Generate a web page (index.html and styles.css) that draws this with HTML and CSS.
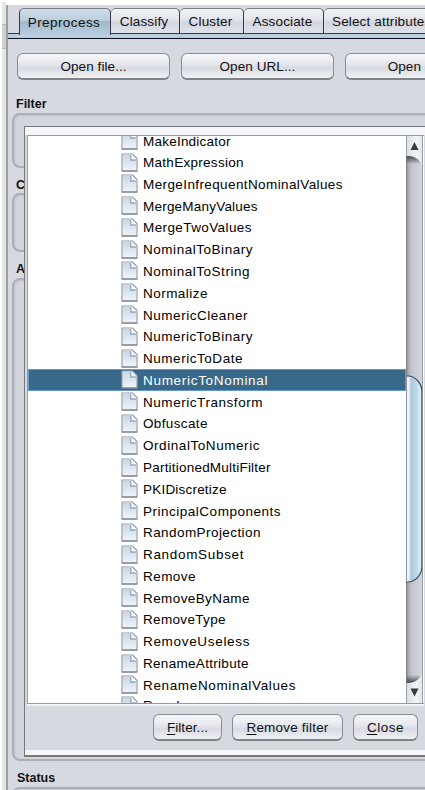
FILE: index.html
```
<!DOCTYPE html>
<html lang="en">
<head>
<meta charset="utf-8">
<title>Weka Explorer</title>
<link rel="stylesheet" href="styles.css">
</head>
<body>
<svg class="defs" width="0" height="0">
  <defs>
    <linearGradient id="paper" x1="0" y1="0" x2="0" y2="1">
      <stop offset="0" stop-color="#c8d7e6"/><stop offset="1" stop-color="#edf3f9"/>
    </linearGradient>
    <symbol id="file" viewBox="0 0 17 19">
      <path d="M1 1H11.5L16 5.5V18H1Z" fill="#fff" stroke="#949ba5" stroke-width="1.2"/>
      <path d="M2 2H10V7H15V17H2Z" fill="url(#paper)"/>
      <path d="M10 1.500V6.700H15.500Z" fill="#f5f9fc"/>
      <path d="M9.700 2V7H14.800" fill="none" stroke="#93a9c0" stroke-width="1.3"/>
      <path d="M.8 18H16.200" stroke="#777e87" stroke-width="1.2"/>
    </symbol>
  </defs>
</svg>
<div class="window">
  <div class="edge"><div class="edge-mark"></div></div>
  <main class="explorer">
    <nav class="tabs">
      <div class="tab active"><span>Preprocess</span></div>
      <div class="tab classify"><span>Classify</span></div>
      <div class="tab cluster"><span>Cluster</span></div>
      <div class="tab associate"><span>Associate</span></div>
      <div class="tab select"><span>Select attributes</span></div>
    </nav>
    <div class="toolbar">
      <button>Open file...</button><button>Open URL...</button><button>Open DB...</button>
    </div>
    <h2 class="h-filter">Filter</h2>
    <section class="panel p-filter"></section>
    <h2 class="h-current">Current relation</h2>
    <section class="panel p-current"></section>
    <h2 class="h-attr">Attributes</h2>
    <section class="panel p-attr"></section>
    <h2 class="h-status">Status</h2>
    <section class="panel p-status"></section>
  </main>
  <div class="popup">
    <div class="scroller">
      <ul class="tree" id="tree"></ul>
      <div class="scrollbar">
        <svg width="17" height="567" viewBox="0 0 17 567">
          <defs>
            <linearGradient id="track"><stop offset="0" stop-color="#77797e"/><stop offset=".13" stop-color="#aaacb2"/><stop offset=".35" stop-color="#c4c6cc"/><stop offset="1" stop-color="#d5d8de"/></linearGradient>
            <linearGradient id="thumb"><stop offset="0" stop-color="#8b99a7"/><stop offset=".1" stop-color="#fafcfe"/><stop offset=".2" stop-color="#e4edf5"/><stop offset=".3" stop-color="#afc6dc"/><stop offset=".65" stop-color="#bfd5e8"/><stop offset=".88" stop-color="#d9effb"/><stop offset="1" stop-color="#b8d0e2"/></linearGradient>
            <linearGradient id="cap"><stop offset="0" stop-color="#d9dce1"/><stop offset=".6" stop-color="#f3f5f7"/><stop offset="1" stop-color="#e0e3e8"/></linearGradient>
            <linearGradient id="shade" x1="0" y1="0" x2="0" y2="1"><stop offset="0" stop-color="#44474c"/><stop offset="1" stop-color="#44474c" stop-opacity="0"/></linearGradient>
            <linearGradient id="shade2" x1="0" y1="1" x2="0" y2="0"><stop offset="0" stop-color="#44474c"/><stop offset="1" stop-color="#44474c" stop-opacity="0"/></linearGradient>
          </defs>
          <rect width="17" height="567" fill="url(#track)"/>
          <rect y="20" width="15" height="8" fill="url(#shade)"/>
          <rect y="539" width="15" height="8" fill="url(#shade2)"/>
          <path d="M0 0H17V31Q12 20 3 20H0Z" fill="url(#cap)"/>
          <path d="M0 567H17V536Q12 547 3 547H0Z" fill="url(#cap)"/>
          <path d="M4.500 14 8.500 6 12.500 14Z" fill="#3a3a3c"/>
          <path d="M4.500 552.500H12.500L8.500 560.500Z" fill="#3a3a3c"/>
          <path d="M0 240H2C9 240 16 247 16 256V430C16 439 9 446 2 446H0Z" fill="url(#thumb)"/>
          <path d="M0 240H2C9 240 16 247 16 256V430C16 439 9 446 2 446H0" fill="none" stroke="#33495f" stroke-width="1.2"/>
          <path d="M.5 0V567M16.500 0V567" stroke="#84878d" stroke-opacity=".75"/>
        </svg>
      </div>
    </div>
    <div class="actions">
      <button class="b-filter"><u>F</u>ilter...</button><button class="b-remove"><u>R</u>emove filter</button><button class="b-close"><u>C</u>lose</button>
    </div>
  </div>
</div>
<script src="tree.js"></script>
</body>
</html>
```
FILE: styles.css
```
* { box-sizing: border-box; }
body { margin: 0; background: #fff; font: 13.500px/16px "Liberation Sans", Arial, sans-serif; color: #111; overflow: hidden; }
.defs { position: absolute; }
.window { position: relative; display: flex; width: 425px; height: 790px; overflow: hidden; padding-left: 2px; }
.edge { flex: none; width: 4px; margin-top: 2px; padding-top: 22px; background: #e5e5e5; }
.edge-mark { height: 25px; background: #cfcfcf; border: solid #bbb; border-width: 1px 0; }
.explorer { flex: none; width: 419px; height: 785px; margin-top: 5px; border-left: 2px solid #9c9da0; background: #d6d9e0; overflow: hidden; }
.tabs { display: flex; height: 34px; padding: 3px 0 0 11px; border-bottom: 1px solid #0a1020; background: linear-gradient(#d6d9e0 28px, #30384c 28px, #30384c 29px, #b9cee1 29px); }
.tab { flex: none; height: 26px; border: 1px solid #777c86; border-left-width: 0; border-right-color: #343948; border-bottom-color: #343948; border-radius: 5px 5px 0 0; background: linear-gradient(#f3f4f7, #e2e4ea 45%, #d3d6de 55%, #dfe2e9); display: flex; align-items: center; justify-content: center; padding: 2px 2px 0 0; white-space: nowrap; letter-spacing: .15px; }
.tab.active { width: 92px; height: 27px; padding-top: 1px; border-left: 1px solid #343948; border-bottom: 0; background: linear-gradient(#d0dde9, #bdcedd 42%, #a3b8cb 50%, #b9cee1); letter-spacing: .42px; }
.classify { width: 69px; }
.cluster { width: 64px; }
.associate { width: 80px; }
.select { width: 130px; justify-content: flex-start; padding-left: 8px; letter-spacing: .15px; }
.toolbar { display: flex; gap: 11px; padding: 14px 0 0 9px; height: 58px; }
button { flex: none; font: inherit; color: #111; padding: 2px 0 0; height: 27px; border: 1px solid #888c94; border-bottom: 2px solid #7f838a; border-radius: 6px; background: linear-gradient(#f7f8fa, #e5e7ec 42%, #d7dae2 58%, #f0f1f4); white-space: nowrap; letter-spacing: .08px; }
.toolbar button { width: 153px; }
h2 { margin: 0; padding-left: 8px; font-size: 12.500px; line-height: 16px; font-weight: bold; color: #111; }
.panel { margin-left: 4px; width: 440px; border: 2px solid #adafb5; border-radius: 8px; box-shadow: inset 1px 1px 2px #bfc2c9; background: #d3d6dd; }
.h-filter { position: relative; top: -1px; }
.p-filter { height: 55px; }
.p-current { height: 59px; }
.p-attr { height: 483px; }
.p-status { height: 40px; }
.h-current { height: 25px; padding-top: 9px; }
.h-attr { height: 26px; padding-top: 9px; }
.h-status { height: 26px; padding-top: 9px; padding-left: 9px; }
.popup { position: absolute; left: 24px; top: 126px; width: 410px; height: 631px; border: 1px solid #75777b; border-bottom-width: 2px; background: linear-gradient(#f4f6f9 8px, #d6d9e0 8px, #d6d9e0 623px, #f4f6f8 623px); padding: 8px 0 0 2px; }
.scroller { display: flex; width: 397px; height: 569px; border: 1px solid #929ba8; border-right: 0; background: #fff; box-shadow: 0 2px #f2f3f6; }
.tree { flex: none; width: 378px; height: 567px; margin: 0; padding: 0; list-style: none; overflow: hidden; }
.tree::before { content: ""; display: block; margin-top: -6.600px; }
.tree li { display: flex; align-items: center; height: 21.790px; padding-left: 93px; color: #000; white-space: nowrap; }
.tree span { padding-top: 2px; }
.tree li:first-child span { padding-top: 3px; }
.tree li:last-child { margin-top: -1px; }
.tree li:last-child span { padding-top: 1px; }
.tree svg { flex: none; width: 17px; height: 19px; margin-right: 5px; }
.tree li.selected { background: #39698a; color: #fff; box-shadow: inset 0 0 0 1px #6699c8; }
.scrollbar { flex: none; width: 17px; height: 567px; }
.scrollbar svg { display: block; }
.actions { display: flex; gap: 10px; padding: 10px 0 0 126px; }
.b-filter { width: 69px; }
.b-remove { width: 111px; letter-spacing: .2px; }
.b-close { width: 65px; letter-spacing: .5px; }
u { text-underline-offset: 2px; }
```
FILE: tree.js
```
// Filter names with their label widths in pixels.
const filters = [
  ["MakeIndicator", 87], ["MathExpression", 100], ["MergeInfrequentNominalValues", 199],
  ["MergeManyValues", 114], ["MergeTwoValues", 108], ["NominalToBinary", 109],
  ["NominalToString", 106], ["Normalize", 64], ["NumericCleaner", 104],
  ["NumericToBinary", 109], ["NumericToDate", 99], ["NumericToNominal", 124],
  ["NumericTransform", 119], ["Obfuscate", 64], ["OrdinalToNumeric", 116],
  ["PartitionedMultiFilter", 127], ["PKIDiscretize", 83], ["PrincipalComponents", 137],
  ["RandomProjection", 117], ["RandomSubset", 100], ["Remove", 52], ["RemoveByName", 106],
  ["RemoveType", 82], ["RemoveUseless", 106], ["RenameAttribute", 105],
  ["RenameNominalValues", 152], ["Reorder", 48]
];
const tree = document.getElementById("tree");
tree.innerHTML = filters.map(([name]) =>
  `<li${name === "NumericToNominal" ? ' class="selected"' : ""}><svg><use href="#file"/></svg><span>${name}</span></li>`
).join("");
tree.querySelectorAll("span").forEach((label, i) => {
  const [name, width] = filters[i];
  const spare = width + 0.5 - label.getBoundingClientRect().width;
  label.style.letterSpacing = spare / (name.length - 1) + "px";
});
```
